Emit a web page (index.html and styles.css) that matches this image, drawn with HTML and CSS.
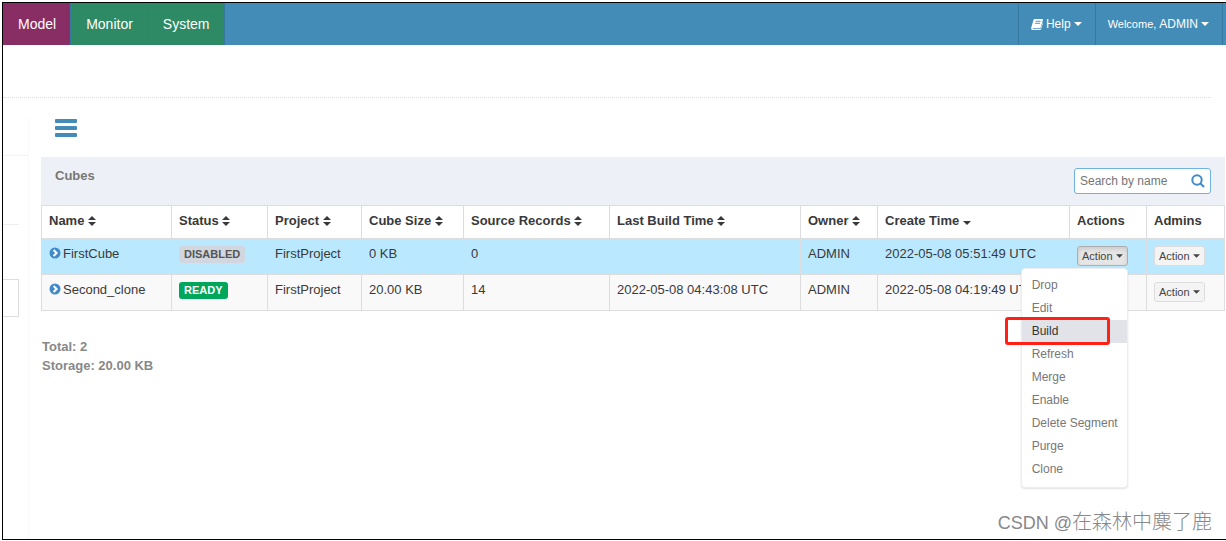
FILE: index.html
```html
<!DOCTYPE html>
<html lang="en">
<head>
<meta charset="utf-8">
<title>Cubes</title>
<link rel="stylesheet" href="styles.css">
</head>
<body>
<svg class="defs" aria-hidden="true">
  <symbol id="sort" viewBox="0 0 8 10"><path d="M4 0 8 4H0zM0 6h8L4 10z"/></symbol>
  <symbol id="caret" viewBox="0 0 8 4"><path d="M0 0h8L4 4z"/></symbol>
  <symbol id="go" viewBox="0 0 12 12"><circle cx="6" cy="6" r="5.500"/><path d="M4.600 3 7.600 6l-3 3" fill="none" stroke="#fff" stroke-width="2"/></symbol>
</svg>
<div class="frame">
  <nav class="navbar">
    <a class="tab tab-active" href="#model">Model</a>
    <a class="tab" href="#monitor">Monitor</a>
    <a class="tab" href="#system">System</a>
    <div class="user-links">
      <a class="user-link" href="#help">
        <svg class="book" viewBox="0 0 13 12"><path d="M4 0h8.200c.7 0 .9.500.7 1L10.600 9c-.2.700-.6 1-1.200 1H2.200c-.6 0-.6 1 .1 1h7.500c.5 0 .8-.3 1-.8l2-6.700.2 1-1.900 6.300c-.2.800-.8 1.200-1.500 1.200H2C.5 12-.2 10.800.2 9.600L2.600 1.200C2.800.5 3.300 0 4 0z" fill="#fff"/><path d="M5 2.500h5.500M4.400 4.700h5.500" stroke="#448cb8"/></svg>
        <span>Help</span>
        <svg class="caret"><use href="#caret"/></svg>
      </a>
      <a class="user-link" href="#account">
        <span class="greeting">Welcome,</span>
        <span>ADMIN</span>
        <svg class="caret"><use href="#caret"/></svg>
      </a>
    </div>
  </nav>
  <div class="subheader"></div>
  <div class="layout">
    <aside class="sidebar">
      <div class="side-head"></div>
      <div class="side-title"></div>
      <div class="side-box"></div>
    </aside>
    <main class="main">
      <button class="toggle" type="button" aria-label="Toggle sidebar">
        <svg viewBox="0 0 22 20"><rect y="1" width="22" height="4" rx="1"/><rect y="8" width="22" height="4" rx="1"/><rect y="15" width="22" height="4" rx="1"/></svg>
      </button>
      <div class="panel-head">
        <h1 class="panel-title">Cubes</h1>
        <div class="search">
          <input class="search-input" type="text" placeholder="Search by name" aria-label="Search by name">
          <svg class="search-icon" viewBox="0 0 14 14"><circle cx="6" cy="6" r="4.700"/><path d="m9.500 9.500 3.500 3.500"/></svg>
        </div>
      </div>
      <table class="cubes">
        <colgroup>
          <col class="c-name"><col class="c-status"><col class="c-project"><col class="c-size"><col class="c-records"><col class="c-build"><col class="c-owner"><col class="c-created"><col class="c-actions"><col class="c-admins">
        </colgroup>
        <thead>
          <tr>
            <th>Name <svg class="sort"><use href="#sort"/></svg></th>
            <th>Status <svg class="sort"><use href="#sort"/></svg></th>
            <th>Project <svg class="sort"><use href="#sort"/></svg></th>
            <th>Cube Size <svg class="sort"><use href="#sort"/></svg></th>
            <th>Source Records <svg class="sort"><use href="#sort"/></svg></th>
            <th>Last Build Time <svg class="sort"><use href="#sort"/></svg></th>
            <th>Owner <svg class="sort"><use href="#sort"/></svg></th>
            <th>Create Time <svg class="caret"><use href="#caret"/></svg></th>
            <th>Actions</th>
            <th>Admins</th>
          </tr>
        </thead>
        <tbody>
          <tr class="selected">
            <td><svg class="go"><use href="#go"/></svg>FirstCube</td>
            <td><span class="label label-off">DISABLED</span></td>
            <td>FirstProject</td>
            <td>0 KB</td>
            <td>0</td>
            <td></td>
            <td>ADMIN</td>
            <td>2022-05-08 05:51:49 UTC</td>
            <td>
              <div class="dropdown">
                <button class="action action-open" type="button">Action <svg class="caret-sm"><use href="#caret"/></svg></button>
                <ul class="menu">
                  <li><a class="item" href="#drop">Drop</a></li>
                  <li><a class="item" href="#edit">Edit</a></li>
                  <li class="marked"><a class="item item-hover" href="#build">Build</a><span class="mark"></span></li>
                  <li><a class="item" href="#refresh">Refresh</a></li>
                  <li><a class="item" href="#merge">Merge</a></li>
                  <li><a class="item" href="#enable">Enable</a></li>
                  <li><a class="item" href="#delete">Delete Segment</a></li>
                  <li><a class="item" href="#purge">Purge</a></li>
                  <li><a class="item" href="#clone">Clone</a></li>
                </ul>
              </div>
            </td>
            <td><button class="action" type="button">Action <svg class="caret-sm"><use href="#caret"/></svg></button></td>
          </tr>
          <tr>
            <td><svg class="go"><use href="#go"/></svg>Second_clone</td>
            <td><span class="label label-ready">READY</span></td>
            <td>FirstProject</td>
            <td>20.00 KB</td>
            <td>14</td>
            <td>2022-05-08 04:43:08 UTC</td>
            <td>ADMIN</td>
            <td>2022-05-08 04:19:49 UTC</td>
            <td><button class="action" type="button">Action <svg class="caret-sm"><use href="#caret"/></svg></button></td>
            <td><button class="action" type="button">Action <svg class="caret-sm"><use href="#caret"/></svg></button></td>
          </tr>
        </tbody>
      </table>
      <div class="totals">
        <div>Total: 2</div>
        <div>Storage: 20.00 KB</div>
      </div>
    </main>
  </div>
  <div class="watermark"><span class="watermark-site">CSDN @</span><span lang="zh">在森林中麋了鹿</span></div>
</div>
</body>
</html>
```
FILE: styles.css
```css
* { box-sizing: border-box; }

body {
  margin: 0;
  background: #fff;
  color: #393939;
  font: 13px/18px "Liberation Sans", Arial, "Noto Sans CJK SC", sans-serif;
}

a { color: inherit; text-decoration: none; }

.defs { position: absolute; width: 0; height: 0; }

.frame {
  position: relative;
  display: flex;
  flex-direction: column;
  min-height: calc(100vh - 3px);
  margin: 2px 0 1px 2px;
  border: 1px solid #000;
  border-right: 0;
  overflow: hidden;
}

/* Top navigation */
.navbar {
  display: flex;
  height: 42px;
  padding-right: 3px;
  background: #448cb8;
  color: #fff;
}

.tab {
  display: flex;
  align-items: center;
  padding: 0 14px 0 15px;
  border-right: 1px solid #37789f;
  background: #2e8965;
  font-size: 14px;
}

.tab-active { background: #892e65; }

.user-links { display: flex; margin-left: auto; }

.user-link {
  display: flex;
  align-items: center;
  gap: 3px;
  padding: 0 13px 0 12px;
  border-left: 1px solid #37789f;
  font-size: 12px;
}

.user-link:last-child { border-right: 1px solid #37789f; }
.greeting { font-size: 11px; }
.book { width: 12px; height: 11px; }
.caret { width: 8px; height: 4px; fill: currentColor; }
.caret-sm { width: 7px; height: 4px; vertical-align: 2px; fill: currentColor; }

.subheader {
  height: 53px;
  margin-right: 15px;
  border-bottom: 1px dotted #ddd;
}

/* Page columns */
.layout { display: flex; flex: 1; margin-top: 20px; }

.sidebar { flex: none; width: 26px; border-right: 1px solid #f9f9f9; }
.side-head { height: 38px; border-bottom: 1px solid #f3f3f3; }
.side-title { height: 69px; margin-right: 9px; border-bottom: 1px solid #eee; }
.side-box { height: 38px; margin: 54px 9px 0 0; border: 1px solid #ddd; border-left: 0; }

.main { flex: 1; min-width: 0; padding: 0 1px 0 12px; }

.toggle {
  display: block;
  margin: 0 0 19px 14px;
  padding: 0;
  border: 0;
  background: none;
}

.toggle svg { display: block; width: 22px; height: 20px; fill: #448cb8; }

.panel-head {
  display: flex;
  justify-content: space-between;
  align-items: flex-start;
  height: 48px;
  padding: 10px 14px 0 14px;
  background: #edf1f7;
}

.panel-title { margin: 0; color: #777; font-size: 13px; line-height: 18px; }

.search {
  display: flex;
  align-items: center;
  width: 137px;
  height: 26px;
  margin-top: 1px;
  padding: 0 5px;
  border: 1px solid #6fb3e0;
  border-radius: 3px;
  background: #fff;
}

.search-input {
  flex: 1;
  min-width: 0;
  padding: 0;
  border: 0;
  outline: 0;
  background: none;
  font: 12px/18px "Liberation Sans", Arial, sans-serif;
}

.search-input::placeholder { color: #757575; }
.search-icon { width: 14px; height: 14px; fill: none; stroke: #428bca; stroke-width: 2; }

/* Cube list */
.cubes { width: 100%; table-layout: fixed; border-collapse: collapse; }

.c-name { width: 130px; }
.c-status { width: 96px; }
.c-project { width: 94px; }
.c-size { width: 102px; }
.c-records { width: 146px; }
.c-build { width: 191px; }
.c-owner { width: 77px; }
.c-created { width: 192px; }
.c-actions { width: 77px; }
.c-admins { width: 78px; }

.cubes th, .cubes td {
  padding: 6px 7px 0;
  border: 1px solid #ddd;
  text-align: left;
  vertical-align: top;
  white-space: nowrap;
}

.cubes th { height: 33px; }
.cubes td { height: 36px; background: #f9f9f9; }
.cubes .selected td { background: #bae9ff; }

.sort { width: 8px; height: 10px; vertical-align: -1px; fill: currentColor; }
.go { width: 12px; height: 12px; margin-right: 2px; vertical-align: -1px; fill: #428bca; }

.label {
  display: inline-block;
  padding: 0 5px;
  border-radius: 3px;
  font-size: 11px;
  font-weight: bold;
  line-height: 17px;
}

.label-off { background: #d2d6de; color: #555; }
.label-ready { background: #00a65a; color: #fff; }

.action {
  display: block;
  height: 20px;
  margin-top: 1px;
  padding: 0 4px;
  border: 1px solid #ddd;
  border-radius: 3px;
  background: #f4f4f4;
  color: #444;
  font: 11px/18px "Liberation Sans", Arial, sans-serif;
}

.action-open {
  border-color: #adadad;
  background: #e6e6e6;
  box-shadow: inset 0 2px 4px rgba(0, 0, 0, 0.13);
}

.dropdown { position: relative; width: fit-content; }

.menu {
  position: absolute;
  z-index: 1;
  top: 100%;
  right: 0;
  width: 107px;
  margin: 2px 0 0;
  padding: 5px 0 6px;
  border: 1px solid #eee;
  border-radius: 4px;
  background: #fff;
  box-shadow: 0 1px 2px rgba(0, 0, 0, 0.12);
  list-style: none;
}

.item { display: block; padding: 0 10px; color: #777; font-size: 12px; line-height: 23px; }
.item-hover { background: #e1e3e9; color: #333; }

.marked { position: relative; }

.mark {
  position: absolute;
  inset: -3px 17px -2px -17px;
  border: 3px solid #ff2116;
  border-radius: 3px;
  pointer-events: none;
}

.totals { margin: 26px 1px 0; color: #888; font-weight: bold; line-height: 19px; }

.watermark {
  position: absolute;
  right: 14px;
  bottom: 3px;
  color: #888;
  font: 300 20px/26px "Noto Sans CJK SC", sans-serif;
}

.watermark-site { font-family: "Liberation Sans", Arial, sans-serif; font-size: 18px; }
```
